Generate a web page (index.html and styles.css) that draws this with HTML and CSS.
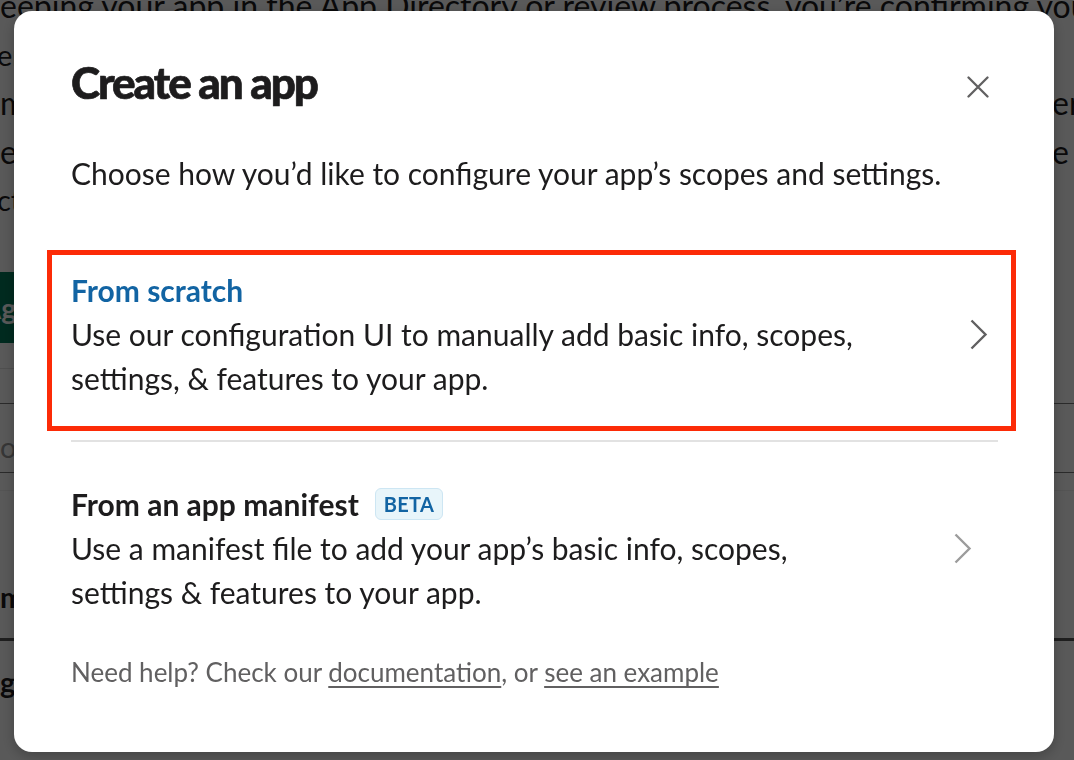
FILE: index.html
```html
<!DOCTYPE html>
<html lang="en">
<head>
<meta charset="utf-8">
<title>Create an app</title>
<link rel="stylesheet" href="styles.css">
</head>
<body>
<div class="page">
  <div class="bg-para">
    <div class="bg-line">eeping your app in the App Directory or review process, you’re confirming your</div>
    <div class="bg-row"><span class="shift-s">ers of your app must follow the guidelines.</span><span></span></div>
    <div class="bg-row"><span>mmunicate with users who install it here</span><span>ere are</span></div>
    <div class="bg-row"><span>e content you provide in your listing</span><span>e App Directory</span></div>
    <div class="bg-row"><span class="shift-s">ct information.</span><span></span></div>
  </div>
  <div class="bg-button">Agree</div>
  <div class="bg-rule-faint"></div>
  <div class="bg-field">ose a workspace</div>
  <div class="bg-rule-light"></div>
  <div class="bg-strong bg-strong-first">m</div>
  <div class="bg-rule-dark"></div>
  <div class="bg-strong">g</div>
</div>

<div class="overlay">
  <section class="modal" role="dialog" aria-labelledby="modal-title">
    <header class="modal-header">
      <h1 class="modal-title" id="modal-title">Create an app</h1>
      <button class="close-btn" type="button" aria-label="Close">
        <svg width="22" height="22" viewBox="0 0 22 22" aria-hidden="true"><path d="M1.5 1.5 L20.5 20.5 M20.5 1.5 L1.5 20.5" fill="none" stroke="#616061" stroke-width="2.3" stroke-linecap="round"/></svg>
      </button>
    </header>
    <p class="modal-intro">Choose how you’d like to configure your app’s scopes and settings.</p>

    <div class="options">
      <a class="option option-hover" href="#">
        <div class="option-text">
          <div class="option-title">From scratch</div>
          <div class="option-desc">Use our configuration UI to manually add basic info, scopes, settings, &amp; features to your app.</div>
        </div>
        <svg class="chevron" width="18" height="31" viewBox="0 0 18 31" aria-hidden="true"><path d="M1.5 1.5 L15.5 15.5 L1.5 29.5" fill="none" stroke="currentColor" stroke-width="2.4"/></svg>
      </a>
      <a class="option" href="#">
        <div class="option-text">
          <div class="option-title">From an app manifest <span class="badge">BETA</span></div>
          <div class="option-desc">Use a manifest file to add your app’s basic info, scopes, settings &amp; features to your app.</div>
        </div>
        <svg class="chevron" width="18" height="31" viewBox="0 0 18 31" aria-hidden="true"><path d="M1.5 1.5 L15.5 15.5 L1.5 29.5" fill="none" stroke="currentColor" stroke-width="2.4"/></svg>
      </a>
    </div>

    <p class="modal-help">Need help? Check our <a href="#">documentation</a>, or <a href="#">see an example</a></p>
  </section>
</div>
</body>
</html>
```
FILE: styles.css
```css
html, body {
  margin: 0;
  height: 100%;
}

body {
  font-family: Lato, "Noto Sans", sans-serif;
  background: #ffffff;
  color: #1d1c1d;
  overflow: hidden;
}

/* ---------- page behind the dialog ---------- */
.page {
  width: 1074px;
  height: 760px;
  overflow: hidden;
}

.bg-para {
  margin-top: -18px;
  font-size: 32px;
  line-height: 48.5px;
}

.bg-line {
  white-space: nowrap;
  overflow: hidden;
}

.bg-row {
  display: grid;
  grid-template-columns: 1052px 1fr;
  white-space: nowrap;
  overflow: hidden;
}

.bg-row > span {
  overflow: hidden;
}

.bg-row > .shift-s {
  margin-left: -3px;
  font-size: 29px;
}

.bg-button {
  margin: 47px 0 0 -43px;
  width: 320px;
  height: 71px;
  box-sizing: border-box;
  padding-left: 24px;
  border-radius: 8px;
  background: #007a5a;
  color: #ffffff;
  font-size: 29px;
  font-weight: 700;
  line-height: 71px;
}

.bg-rule-faint {
  margin-top: 25px;
  width: 420px;
  border-top: 1px solid #e3e3e3;
}

.bg-field {
  margin-top: 34px;
  height: 70px;
  box-sizing: border-box;
  padding-top: 19px;
  border-top: 1px solid #7a7a7a;
  border-bottom: 1px solid #7a7a7a;
  color: #9a9a9a;
  font-size: 29px;
  line-height: 48px;
  white-space: nowrap;
  overflow: hidden;
}

.bg-rule-light {
  margin-top: 17px;
  border-top: 1px solid #f0f0f0;
}

.bg-strong {
  font-size: 29px;
  font-weight: 700;
  line-height: 48px;
  margin-top: 17px;
}

.bg-strong-first {
  margin-top: 82px;
}

.bg-rule-dark {
  margin-top: 17px;
  border-top: 3px solid #585858;
}

/* ---------- overlay & dialog ---------- */
.overlay {
  position: fixed;
  inset: 0;
  background: rgba(0, 0, 0, 0.65);
  display: flex;
  padding: 11px 20px 8px 14px;
}

.modal {
  flex: 1;
  display: flex;
  flex-direction: column;
  background: #ffffff;
  border-radius: 18px;
  box-shadow: 0 4px 14px rgba(0, 0, 0, 0.25);
  padding: 45px 56px 0 57px;
}

.modal-header {
  display: flex;
  justify-content: space-between;
  align-items: flex-start;
}

.modal-title {
  margin: 0;
  font-family: "Lato Black", Lato, "Noto Sans", sans-serif;
  font-size: 44px;
  font-weight: 900;
  line-height: 52px;
  letter-spacing: -2px;
  color: #1d1c1d;
  -webkit-text-stroke: 0.7px #1d1c1d;
}

.close-btn {
  margin-top: 11px;
  width: 40px;
  height: 40px;
  padding: 0;
  border: 0;
  background: transparent;
  display: flex;
  align-items: center;
  justify-content: center;
}

.modal-intro {
  margin: 43px 0 0;
  font-size: 30px;
  line-height: 44px;
}

.options {
  margin-top: 33px;
  display: flex;
  flex-direction: column;
}

.option {
  position: relative;
  display: flex;
  align-items: center;
  justify-content: space-between;
  padding: 40px 0;
  color: #1d1c1d;
  text-decoration: none;
}

.option + .option {
  border-top: 2px solid #e2e2e2;
}

.option-text {
  max-width: 800px;
}

.option-title {
  display: flex;
  align-items: center;
  gap: 16px;
  font-size: 30px;
  font-weight: 700;
  line-height: 44px;
}

.option-desc {
  font-size: 30px;
  line-height: 44px;
}

.chevron {
  flex: none;
  margin-right: 26px;
  color: #9c9c9c;
}

.option-hover .option-title {
  color: #1264a3;
}

.option-hover .chevron {
  margin-right: 10px;
  color: #616061;
}

/* screenshot annotation around the hovered option */
.option-hover::after {
  content: "";
  position: absolute;
  top: 22px;
  bottom: 9px;
  left: -24px;
  right: -18px;
  border: 5px solid #fc2b07;
  pointer-events: none;
}

.badge {
  display: inline-flex;
  align-items: center;
  height: 32px;
  box-sizing: border-box;
  padding: 0 8px;
  border: 1px solid #cde6f3;
  border-radius: 6px;
  background: #e8f5fa;
  color: #1264a3;
  font-size: 20px;
  font-weight: 700;
  letter-spacing: 0.3px;
}

.modal-help {
  margin: -2px 0 0;
  font-size: 26px;
  line-height: 40px;
  color: #616061;
}

.modal-help a {
  color: #616061;
  text-decoration: underline;
  text-underline-offset: 4px;
}
```
